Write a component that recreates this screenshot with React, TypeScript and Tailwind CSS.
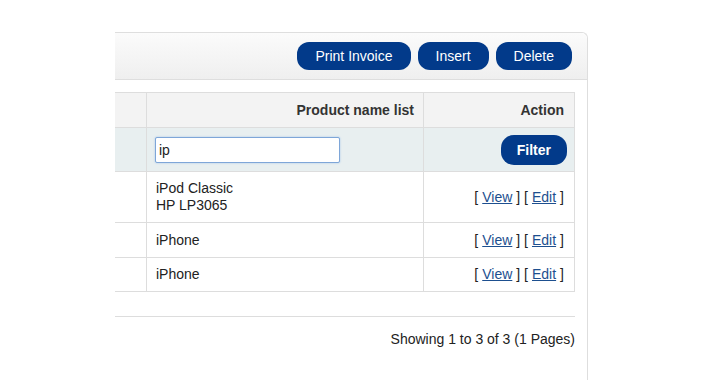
import React, { useState } from "react";

type ProductRow = {
  names: string[];
};

const rows: ProductRow[] = [
  { names: ["iPod Classic", "HP LP3065"] },
  { names: ["iPhone"] },
  { names: ["iPhone"] },
];

const rowHeights = ["h-[51px]", "h-[35px]", "h-[34px]"];

function PillButton({ label }: { label: string }) {
  return (
    <button
      type="button"
      className="h-[28px] rounded-[12px] bg-[#023a8a] px-[18px] text-[14px] leading-none text-white"
    >
      {label}
    </button>
  );
}

export default function App() {
  const [filterName, setFilterName] = useState("ip");

  return (
    <div
      className="h-[380px] w-[710px] overflow-hidden bg-white pl-[115px] pt-[32px] text-[14px] text-[#222]"
      style={{ fontFamily: '"Liberation Sans", Arial, sans-serif' }}
    >
      <div className="h-[400px] w-[473px] rounded-tr-[6px] border-t border-r border-[#dedede]">
        {/* toolbar */}
        <div className="flex h-[47px] items-start justify-end gap-[7px] rounded-tr-[6px] border-b border-[#dedede] bg-gradient-to-b from-[#fbfbfb] to-[#efefef] pr-[15px] pt-[9px]">
          <PillButton label="Print Invoice" />
          <PillButton label="Insert" />
          <PillButton label="Delete" />
        </div>

        <div className="pr-[12px] pt-[12px]">
          {/* list */}
          <div className="border-t border-[#dddddd]">
            <div className="flex h-[35px] items-center border-b border-[#dddddd] bg-[#f3f3f3] font-bold text-[#333]">
              <div className="h-full w-[32px] border-r border-[#dddddd]" />
              <div className="flex h-full w-[277px] items-center justify-end border-r border-[#dddddd] pr-[9px]">
                Product name list
              </div>
              <div className="flex h-full flex-1 items-center justify-end border-r border-[#dddddd] pr-[10px]">
                Action
              </div>
            </div>

            <div className="flex h-[44px] items-center border-b border-[#dddddd] bg-[#e8eff0]">
              <div className="h-full w-[32px] border-r border-[#dddddd]" />
              <div className="flex h-full w-[277px] items-center border-r border-[#dddddd] pl-[8px]">
                <input
                  value={filterName}
                  onChange={(e) => setFilterName(e.target.value)}
                  className="h-[26px] w-[185px] rounded-[2px] border border-[#7ea6d8] bg-white px-[3px] text-[14px] text-[#222] outline-none shadow-[0_0_2px_#9fc0e8]"
                />
              </div>
              <div className="flex h-full flex-1 items-center justify-end border-r border-[#dddddd] pr-[7px]">
                <button
                  type="button"
                  className="h-[30px] rounded-[13px] bg-[#023a8a] px-[16px] text-[14px] font-bold leading-none text-white"
                >
                  Filter
                </button>
              </div>
            </div>

            {rows.map((row, i) => (
              <div
                key={i}
                className={`flex items-center border-b border-[#dddddd] ${rowHeights[i]}`}
              >
                <div className="h-full w-[32px] border-r border-[#dddddd]" />
                <div className="flex h-full w-[277px] flex-col justify-center border-r border-[#dddddd] pl-[9px] leading-[17px]">
                  {row.names.map((name) => (
                    <span key={name}>{name}</span>
                  ))}
                </div>
                <div className="flex h-full flex-1 items-center justify-end border-r border-[#dddddd] pr-[10px]">
                  [ <a href="#" className="mx-[4px] text-[#1d4f8f] underline">View</a> ] [{" "}
                  <a href="#" className="mx-[4px] text-[#1d4f8f] underline">Edit</a> ]
                </div>
              </div>
            ))}
          </div>

          {/* pagination */}
          <div className="mt-[24px] border-t border-[#dddddd] pt-[14px] text-right leading-[17px]">
            Showing 1 to 3 of 3 (1 Pages)
          </div>
        </div>
      </div>
    </div>
  );
}
